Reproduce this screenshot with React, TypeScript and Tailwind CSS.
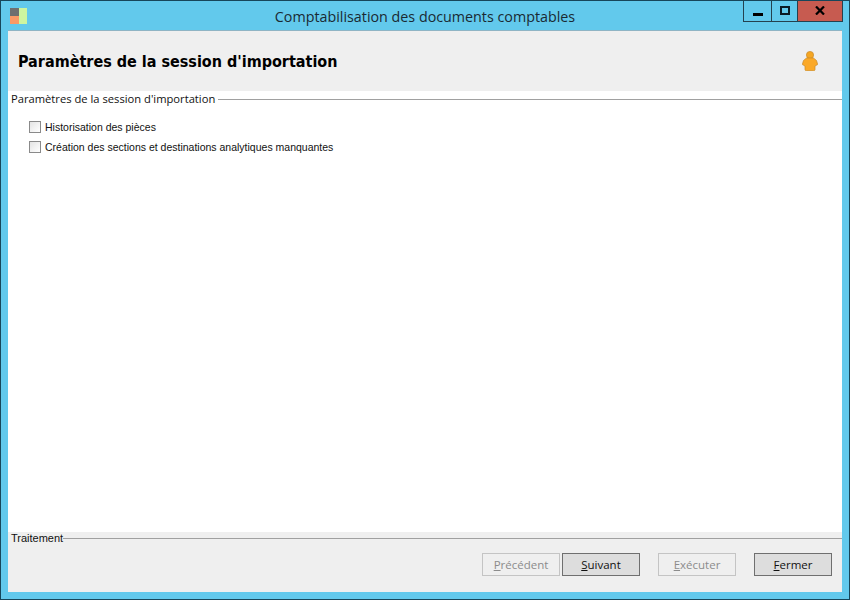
function GroupTitle({ label, textClass, gapClass }: { label: string; textClass: string; gapClass: string }) {
  return (
    <div className={`flex items-center pl-[3px] ${gapClass}`}>
      <span className={`text-[#111] ${textClass}`}>{label}</span>
      <div className="h-px flex-1 bg-[#a0a0a0]" />
    </div>
  )
}

function CheckRow({ label }: { label: string }) {
  return (
    <label className="flex h-[20px] items-center gap-[4px] pl-[21px]">
      <span className="h-[12px] w-[12px] border border-[#8a8a8a] bg-[linear-gradient(135deg,#e4e4e4,#ffffff)]" />
      <span className="pt-[2px] font-['Liberation_Sans',sans-serif] text-[10.5px] text-[#111]">{label}</span>
    </label>
  )
}

function WizardButton({ hot, rest, disabled }: { hot: string; rest: string; disabled?: boolean }) {
  return (
    <button
      className={`h-[23px] w-[78px] border font-['Open_Sans',sans-serif] text-[11.5px] leading-none ${
        disabled ? 'border-[#c4c4c4] bg-[#efefef] text-[#8c8c8c]' : 'border-[#6f6f6f] bg-[#dddddd] text-[#111]'
      }`}
    >
      <span className="underline">{hot}</span>
      {rest}
    </button>
  )
}

function PersonIcon() {
  return (
    <svg width="16" height="20" viewBox="0 0 16 20">
      <circle cx="8" cy="4" r="3.6" fill="#f5a623" stroke="#c98a2a" strokeWidth="0.7" />
      <path d="M4.5 7 H11.5 L14.5 9.5 L15.7 13.5 L13 15 V18.5 Q13 19.7 11.5 19.7 H4.5 Q3 19.7 3 18.5 V15 L0.3 13.5 L1.5 9.5 Z" fill="#fba928" stroke="#c98a2a" strokeWidth="0.7" />
    </svg>
  )
}

export default function App() {
  return (
    <div className="flex h-[600px] w-[850px] flex-col border border-[#17465a] bg-[#62c9ec]">
      {/* Title bar */}
      <div className="grid h-[29px] grid-cols-[1fr_auto_1fr] items-start">
        <div className="flex pl-[9px] pt-[7px]">
          <svg width="18" height="16" viewBox="0 0 18 16">
            <rect x="0" y="0" width="9" height="8" fill="#6f6f6f" />
            <rect x="0" y="8" width="9" height="8" fill="#fb9a66" />
            <rect x="9" y="0" width="8" height="16" fill="#cdf5a0" />
          </svg>
        </div>
        <div className="pt-[6px] font-['Open_Sans',sans-serif] text-[14.3px] leading-[19px] text-[#1a2a33]">
          Comptabilisation des documents comptables
        </div>
        <div className="flex justify-end pr-[6px]">
          <div className="flex h-[21px] border-x border-b border-[#24414f]">
            <div className="flex w-[28px] items-end justify-center border-r border-[#24414f] pb-[5px]">
              <div className="h-[3px] w-[10px] bg-black" />
            </div>
            <div className="flex w-[26px] items-center justify-center border-r border-[#24414f] pb-[2px]">
              <div className="h-[9px] w-[10px] border-2 border-[#0a1a25]" />
            </div>
            <div className="flex w-[44px] items-center justify-center bg-[#c75b50] pb-[1px]">
              <svg width="10" height="9" viewBox="0 0 10 9">
                <path d="M1 0.5 L9 8.5 M9 0.5 L1 8.5" stroke="#000" strokeWidth="2.2" />
              </svg>
            </div>
          </div>
        </div>
      </div>

      {/* Client area */}
      <div className="mx-[7px] mb-[7px] flex flex-1 flex-col border-t border-[#8fb4c4] bg-white">
        <div className="flex h-[60px] items-center justify-between bg-[#efefef] pl-[10px] pr-[24px]">
          <h1 className="pt-[1px] font-['DejaVu_Sans_Condensed','DejaVu_Sans',sans-serif] text-[16px] font-bold text-black">
            Paramètres de la session d'importation
          </h1>
          <PersonIcon />
        </div>

        <div className="flex-1 pt-[1px]">
          <GroupTitle
            label="Paramètres de la session d'importation"
            textClass="font-['Open_Sans',sans-serif] text-[11.2px] leading-[14px]"
            gapClass="gap-[3px]"
          />
          <div className="pt-[11px]">
            <CheckRow label="Historisation des pièces" />
            <CheckRow label="Création des sections et destinations analytiques manquantes" />
          </div>
        </div>

        <div className="h-[60px] bg-[#efefef]">
          <GroupTitle
            label="Traitement"
            textClass="font-['Liberation_Sans',sans-serif] text-[11px] leading-[13px]"
            gapClass="gap-0"
          />
          <div className="flex justify-end pr-[10px] pt-[8px]">
            <WizardButton hot="P" rest="récédent" disabled />
            <div className="w-[2px]" />
            <WizardButton hot="S" rest="uivant" />
            <div className="w-[18px]" />
            <WizardButton hot="E" rest="xécuter" disabled />
            <div className="w-[18px]" />
            <WizardButton hot="F" rest="ermer" />
          </div>
        </div>
      </div>
    </div>
  )
}
